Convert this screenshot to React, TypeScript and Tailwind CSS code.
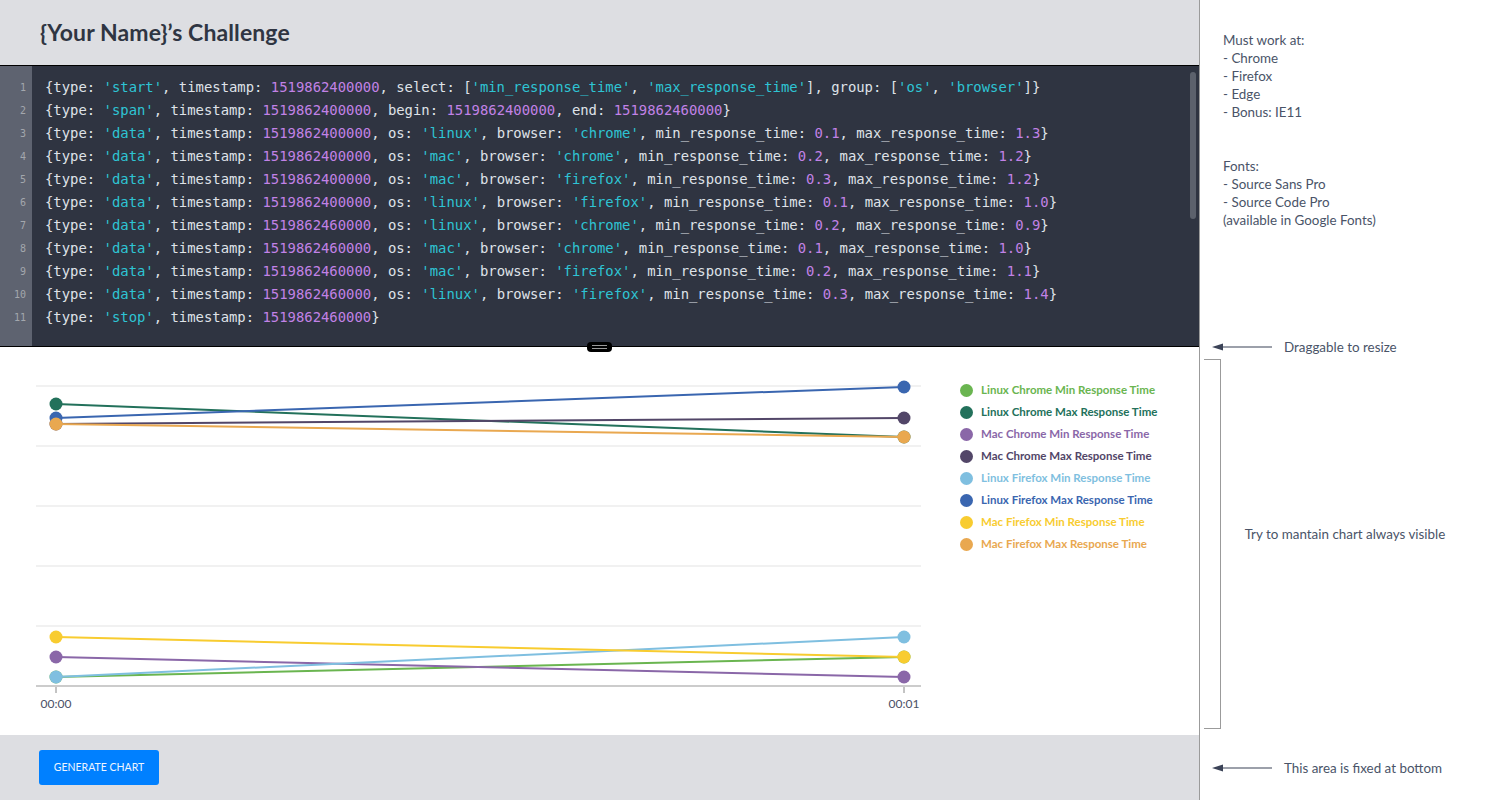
import React from "react";

const codeLines = [
  "{type: 'start', timestamp: 1519862400000, select: ['min_response_time', 'max_response_time'], group: ['os', 'browser']}",
  "{type: 'span', timestamp: 1519862400000, begin: 1519862400000, end: 1519862460000}",
  "{type: 'data', timestamp: 1519862400000, os: 'linux', browser: 'chrome', min_response_time: 0.1, max_response_time: 1.3}",
  "{type: 'data', timestamp: 1519862400000, os: 'mac', browser: 'chrome', min_response_time: 0.2, max_response_time: 1.2}",
  "{type: 'data', timestamp: 1519862400000, os: 'mac', browser: 'firefox', min_response_time: 0.3, max_response_time: 1.2}",
  "{type: 'data', timestamp: 1519862400000, os: 'linux', browser: 'firefox', min_response_time: 0.1, max_response_time: 1.0}",
  "{type: 'data', timestamp: 1519862460000, os: 'linux', browser: 'chrome', min_response_time: 0.2, max_response_time: 0.9}",
  "{type: 'data', timestamp: 1519862460000, os: 'mac', browser: 'chrome', min_response_time: 0.1, max_response_time: 1.0}",
  "{type: 'data', timestamp: 1519862460000, os: 'mac', browser: 'firefox', min_response_time: 0.2, max_response_time: 1.1}",
  "{type: 'data', timestamp: 1519862460000, os: 'linux', browser: 'firefox', min_response_time: 0.3, max_response_time: 1.4}",
  "{type: 'stop', timestamp: 1519862460000}",
];

// y values are in chart pixels (top of chart = 0)
const series = [
  { name: "Linux Chrome Min Response Time", color: "#6ab550", from: 330, to: 310 },
  { name: "Linux Chrome Max Response Time", color: "#23715b", from: 57, to: 90 },
  { name: "Mac Chrome Min Response Time", color: "#8a67a8", from: 310, to: 330 },
  { name: "Mac Chrome Max Response Time", color: "#524668", from: 77, to: 71 },
  { name: "Linux Firefox Min Response Time", color: "#7fbfe0", from: 330, to: 290 },
  { name: "Linux Firefox Max Response Time", color: "#3a66b0", from: 71, to: 40 },
  { name: "Mac Firefox Min Response Time", color: "#f8cc30", from: 290, to: 310 },
  { name: "Mac Firefox Max Response Time", color: "#e9a850", from: 77, to: 90 },
];

function CodeLine({ text }: { text: string }) {
  const parts = text.split(/('[^']*'|\d+(?:\.\d+)?)/g).filter((p) => p !== "");
  return (
    <div className="h-[23px] leading-[23px] whitespace-pre">
      {parts.map((p, i) => {
        if (p.startsWith("'")) {
          return (
            <span key={i} className="text-[#2ec4d4]">
              {p}
            </span>
          );
        }
        if (/^\d/.test(p)) {
          return (
            <span key={i} className="text-[#c282e6]">
              {p}
            </span>
          );
        }
        return <span key={i}>{p}</span>;
      })}
    </div>
  );
}

function Arrow() {
  return (
    <svg width="60" height="10" viewBox="0 0 60 10" className="shrink-0">
      <line x1="8" y1="5" x2="60" y2="5" stroke="#3b4357" strokeWidth="1.2" />
      <polygon points="0,5 11,1.5 11,8.5" fill="#3b4357" />
    </svg>
  );
}

function Chart() {
  const grid = [39, 99, 159, 219, 279];
  return (
    <svg width="930" height="388" viewBox="0 0 930 388" className="shrink-0">
      {grid.map((y) => (
        <line key={y} x1="36" y1={y} x2="921" y2={y} stroke="#ececec" strokeWidth="1.5" />
      ))}
      <line x1="36" y1="339" x2="921" y2="339" stroke="#cccccc" strokeWidth="2" />
      <line x1="56" y1="340" x2="56" y2="346" stroke="#888" strokeWidth="1" />
      <line x1="904" y1="340" x2="904" y2="346" stroke="#888" strokeWidth="1" />
      <text x="56" y="361" textAnchor="middle" fontSize="12" fill="#4a5265" fontFamily="Lato, sans-serif">
        00:00
      </text>
      <text x="904" y="361" textAnchor="middle" fontSize="12" fill="#4a5265" fontFamily="Lato, sans-serif">
        00:01
      </text>
      {series.map((s) => (
        <g key={s.name}>
          <line x1="56" y1={s.from} x2="904" y2={s.to} stroke={s.color} strokeWidth="2" />
          <circle cx="56" cy={s.from} r="6.5" fill={s.color} />
          <circle cx="904" cy={s.to} r="6.5" fill={s.color} />
        </g>
      ))}
    </svg>
  );
}

export default function App() {
  return (
    <div className="flex h-[800px] w-[1489px] overflow-hidden bg-white font-['Lato',sans-serif]">
      <div className="flex w-[1199px] shrink-0 flex-col">
        <header className="flex h-[66px] shrink-0 items-center border-b border-black bg-[#dddee2] pl-[40px]">
          <h1 className="text-[23px] font-bold tracking-[0.1px] text-[#2f3542]">{"{Your Name}’s Challenge"}</h1>
        </header>

        <div className="relative flex h-[281px] shrink-0 border-b border-black bg-[#2f3441]">
          <div className="w-[32px] shrink-0 bg-[#5e6370] pt-[10px] pr-[6px] text-right font-['DejaVu_Sans_Mono',monospace] text-[10px] text-[#a3a7ad]">
            {codeLines.map((_, i) => (
              <div key={i} className="h-[23px] leading-[23px]">
                {i + 1}
              </div>
            ))}
          </div>
          <div className="pt-[10px] pl-[13px] font-['DejaVu_Sans_Mono',monospace] text-[13.9px] text-[#dfe2e8]">
            {codeLines.map((l, i) => (
              <CodeLine key={i} text={l} />
            ))}
          </div>
          <div className="absolute top-[6px] right-[3px] h-[147px] w-[6px] rounded-full bg-[#5c616c]" />
          <div className="absolute -bottom-[6px] left-[587px] flex h-[10px] w-[25px] flex-col items-center justify-center gap-[2px] rounded-[4px] bg-black">
            <div className="h-px w-[15px] bg-[#9a9a9a]" />
            <div className="h-px w-[15px] bg-[#9a9a9a]" />
          </div>
        </div>

        <div className="flex h-[388px] shrink-0">
          <Chart />
          <div className="ml-[30px] pt-[32px]">
            {series.map((s) => (
              <div key={s.name} className="flex h-[22px] items-center gap-[8px]">
                <span className="h-[13px] w-[13px] rounded-full" style={{ backgroundColor: s.color }} />
                <span className="text-[11.5px] font-bold" style={{ color: s.color }}>
                  {s.name}
                </span>
              </div>
            ))}
          </div>
        </div>

        <div className="flex flex-1 items-center bg-[#dddee2] pl-[39px]">
          <button className="flex h-[35px] w-[120px] items-center justify-center rounded-[3px] bg-[#0080ff] text-[10.5px] text-[#eef5ff] uppercase">
            Generate Chart
          </button>
        </div>
      </div>

      <aside className="flex w-[290px] shrink-0 flex-col border-l border-[#9b9b9b] text-[13.4px] leading-[18px] text-[#4a5468]">
        <div className="h-[338px] shrink-0 pt-[31px] pl-[23px]">
          <div>Must work at:</div>
          <div>- Chrome</div>
          <div>- Firefox</div>
          <div>- Edge</div>
          <div>- Bonus: IE11</div>
          <div className="mt-[36px]">Fonts:</div>
          <div>- Source Sans Pro</div>
          <div>- Source Code Pro</div>
          <div>(available in Google Fonts)</div>
        </div>
        <div className="flex h-[18px] items-center gap-[12px] pl-[12px]">
          <Arrow />
          <span>Draggable to resize</span>
        </div>
        <div className="mt-[3px] flex h-[370px]">
          <div className="ml-[4px] w-[17px] shrink-0 border-y border-r border-[#9b9b9b]" />
          <div className="flex flex-1 items-center justify-center pr-[20px] pb-[20px]">Try to mantain chart always visible</div>
        </div>
        <div className="mt-[30px] flex h-[18px] items-center gap-[12px] pl-[12px]">
          <Arrow />
          <span>This area is fixed at bottom</span>
        </div>
      </aside>
    </div>
  );
}
